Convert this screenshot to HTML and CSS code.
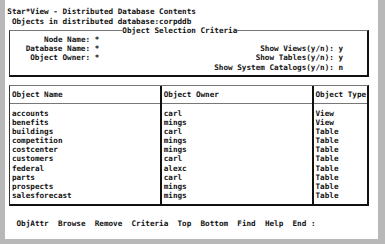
FILE: index.html
```html
<!DOCTYPE html>
<html>
<head>
    <meta charset="UTF-8">
    <title>Star*View - Distributed Database Contents</title>
    <link rel="stylesheet" href="styles.css">
</head>
<body>
<div class="screen">
    <div class="line">Star*View - Distributed Database Contents</div>
    <div class="line"> Objects in distributed database:corpddb</div>

    <fieldset class="criteria">
        <legend>Object Selection Criteria</legend>
        <div class="criteria-grid">
            <div class="criteria-left">
                <div class="line">Node Name: *</div>
                <div class="line">Database Name: *</div>
                <div class="line">Object Owner: *</div>
            </div>
            <div class="criteria-right">
                <div class="line">&nbsp;</div>
                <div class="line">Show Views(y/n): y</div>
                <div class="line">Show Tables(y/n): y</div>
                <div class="line">Show System Catalogs(y/n): n</div>
            </div>
        </div>
    </fieldset>

    <div class="objects">
        <div class="col col-name">
            <div class="col-head">Object Name</div>
            <div class="col-body">
                <div class="line">accounts</div>
                <div class="line">benefits</div>
                <div class="line">buildings</div>
                <div class="line">competition</div>
                <div class="line">costcenter</div>
                <div class="line">customers</div>
                <div class="line">federal</div>
                <div class="line">parts</div>
                <div class="line">prospects</div>
                <div class="line">salesforecast</div>
            </div>
        </div>
        <div class="col col-owner">
            <div class="col-head">Object Owner</div>
            <div class="col-body">
                <div class="line">carl</div>
                <div class="line">mings</div>
                <div class="line">carl</div>
                <div class="line">mings</div>
                <div class="line">mings</div>
                <div class="line">carl</div>
                <div class="line">alexc</div>
                <div class="line">carl</div>
                <div class="line">mings</div>
                <div class="line">mings</div>
            </div>
        </div>
        <div class="col col-type">
            <div class="col-head">Object Type</div>
            <div class="col-body">
                <div class="line">View</div>
                <div class="line">View</div>
                <div class="line">Table</div>
                <div class="line">Table</div>
                <div class="line">Table</div>
                <div class="line">Table</div>
                <div class="line">Table</div>
                <div class="line">Table</div>
                <div class="line">Table</div>
                <div class="line">Table</div>
            </div>
        </div>
    </div>

    <div class="line commands">  ObjAttr  Browse  Remove  Criteria  Top  Bottom  Find  Help  End :</div>
</div>
</body>
</html>
```

FILE: styles.css
```css
body {
    margin: 0;
    background: #b8b8b8;
}

.screen {
    width: 373px;
    height: 239px;
    margin-left: 5px;
    padding: 7.4px 0 0 2.3px;
    box-sizing: border-box;
    background: white;
    color: #111;
    font-family: "DejaVu Sans Mono", "Liberation Mono", monospace;
    font-size: 7.65px;
    font-weight: bold;
    line-height: 9.2px;
}

.line {
    height: 9.2px;
    white-space: pre;
}

/* selection criteria box */
.criteria {
    width: calc(78ch + 1.5px);
    margin: 0 0 0 calc(0.5ch - 0.5px);
    padding: 0 0 3.6px calc(0.5ch - 0.5px);
    box-sizing: border-box;
    min-inline-size: 0;
    border-top: 1px solid #777;
    border-left: 1px solid #333;
    border-right: 2px solid #111;
    border-bottom: 2px solid #111;
}

.criteria legend {
    padding: 0;
    margin-left: 24ch;
    line-height: 9.2px;
}

.criteria-grid {
    display: flex;
}

.criteria-left {
    width: 19ch;
    text-align: right;
}

.criteria-right {
    width: 53ch;
    text-align: right;
}

/* object list */
.objects {
    display: flex;
    width: calc(78ch + 1.5px);
    margin: 7.7px 0 0 calc(0.5ch - 0.5px);
    box-sizing: border-box;
    border-top: 1px solid #777;
    border-left: 1px solid #333;
    border-right: 2px solid #111;
    border-bottom: 2px solid #111;
}

.col {
    box-sizing: border-box;
}

.col-name {
    width: calc(33ch + 0.5px);
    border-right: 2px solid #111;
}

.col-owner {
    width: 33ch;
    border-right: 2px solid #111;
}

.col-type {
    width: calc(12ch - 2px);
}

.col-head {
    line-height: 17.4px;
    border-bottom: 1px solid #777;
    padding-left: calc(0.5ch - 1px);
    white-space: pre;
}

.col-name .col-head,
.col-name .col-body {
    padding-left: calc(0.5ch - 0.5px);
}

.col-body {
    padding: 4.1px 0 3.6px calc(0.5ch - 1px);
}

.commands {
    margin-top: 12.8px;
}
```
